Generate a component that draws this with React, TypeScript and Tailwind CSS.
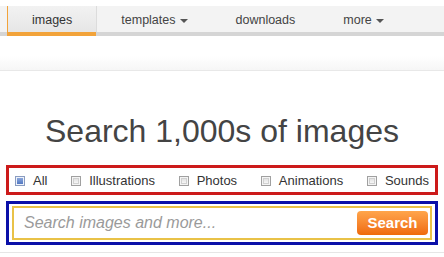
import React from "react";

const tabs = [
  { label: "images", active: true },
  { label: "templates", menu: true },
  { label: "downloads" },
  { label: "more", menu: true },
];

const kinds = ["All", "Illustrations", "Photos", "Animations", "Sounds"];

function Caret() {
  return (
    <svg width="8" height="4" viewBox="0 0 8 4" className="ml-[4px] mt-[2px]">
      <path d="M0 0h8L4 4z" fill="#555" />
    </svg>
  );
}

function Box({ checked }: { checked?: boolean }) {
  return (
    <span
      className={
        checked
          ? "flex h-[10px] w-[10px] items-center justify-center border border-[#8a9cc0] bg-[#eef2fa]"
          : "flex h-[10px] w-[10px] items-center justify-center border border-[#a0a0a0] bg-[#f4f4f4]"
      }
    >
      <span
        className={
          checked
            ? "h-[6px] w-[6px] bg-gradient-to-b from-[#8aa6dc] to-[#5278c2]"
            : "h-[6px] w-[6px] border border-[#d0d0d0] bg-gradient-to-b from-[#e2e2e2] to-[#f6f6f6]"
        }
      />
    </span>
  );
}

export default function App() {
  return (
    <div className="h-[257px] w-[444px] overflow-hidden bg-white font-['Liberation_Sans',Arial,sans-serif]">
      {/* top nav */}
      <div className="mt-[6px] bg-[#f3f3f3]">
        <div className="flex h-[26px] pl-[7px]">
          {tabs.map((t) =>
            t.active ? (
              <div
                key={t.label}
                className="flex items-center border-l border-r border-l-[#f2a33a] border-r-[#dcdcdc] bg-gradient-to-b from-[#f2f2f2] to-[#e6e6e6] px-[24px] pt-[2px] text-[12.5px] text-[#333]"
              >
                {t.label}
              </div>
            ) : (
              <div
                key={t.label}
                className="flex items-center px-[24px] pt-[2px] text-[12.5px] text-[#444]"
              >
                {t.label}
                {t.menu && <Caret />}
              </div>
            )
          )}
        </div>
        <div className="flex h-[4px] bg-[#d5d5d5] pl-[7px]">
          <div className="w-[89px] bg-[#f2a33a]" />
        </div>
      </div>

      {/* faint band */}
      <div className="mt-[20px] h-[15px] border-b border-[#e8e8e8] bg-gradient-to-b from-white to-[#f6f6f6]" />

      <h1 className="mt-[42px] h-[36px] text-center text-[32px] leading-[36px] text-[#444]">
        Search 1,000s of images
      </h1>

      {/* filters */}
      <div className="mx-[6px] mt-[16px] flex h-[30px] items-center justify-between border-[3px] border-[#cc1a1a] pl-[6px] pr-[6px] pt-[1px]">
        {kinds.map((k, i) => (
          <label key={k} className="flex items-center gap-[8px] text-[13px] text-[#333]">
            <Box checked={i === 0} />
            {k}
          </label>
        ))}
      </div>

      {/* search */}
      <div className="mx-[6px] mt-[6px] h-[44px] border-[3px] border-[#0a10a8] px-[3px] pt-[2px]">
        <div className="flex h-[34px] items-center justify-between border-2 border-[#e9c247] pl-[10px] pr-[2px]">
          <span className="text-[16px] italic text-[#9a9a9a]">Search images and more...</span>
          <button className="h-[24px] w-[71px] rounded-[4px] bg-gradient-to-b from-[#ffa54a] to-[#ef6a06] text-[15px] font-bold text-white">
            Search
          </button>
        </div>
      </div>

      <div className="mt-[7px] border-t border-[#e6e6e6]" />
    </div>
  );
}
